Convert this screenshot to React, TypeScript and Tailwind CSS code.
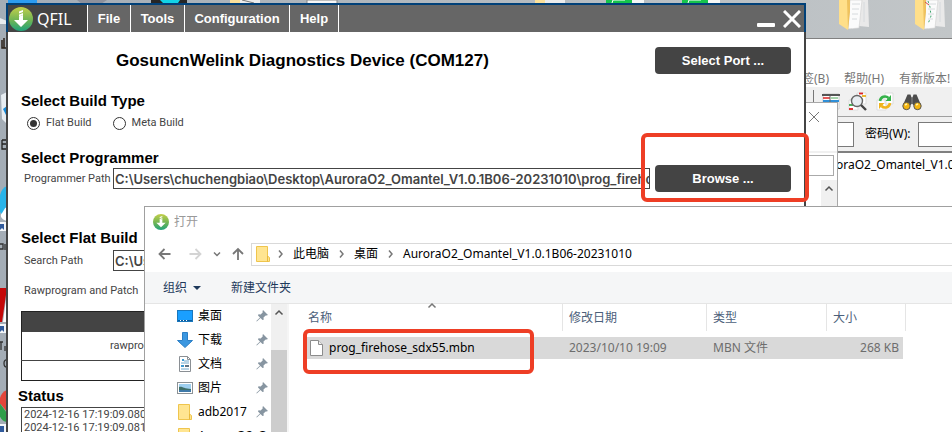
import React, { useState } from "react";

const UI_FONT = "font-['Noto_Sans','Noto_Sans_CJK_SC',sans-serif]";

function DownloadLogo({ className }: { className: string }) {
  return (
    <svg className={className} viewBox="0 0 24 24" aria-hidden="true">
      <defs>
        <linearGradient id="logoFill" x1="0" y1="0" x2="0" y2="1">
          <stop offset="0" stopColor="#c3cf4a" />
          <stop offset="0.55" stopColor="#6fb454" />
          <stop offset="1" stopColor="#1fa37c" />
        </linearGradient>
      </defs>
      <circle cx="12" cy="12" r="12" fill="url(#logoFill)" />
      <path d="M10 4.5l4-1.5v2l-4 1.5zM10 7.5l4-1.5v2l-4 1.5z" fill="#fff" />
      <path d="M10 9.500l4-1.500v5h5L12 20l-7-7h5z" fill="#fff" />
    </svg>
  );
}

function Folder({ className }: { className: string }) {
  return (
    <svg className={className} viewBox="0 0 14 16" aria-hidden="true">
      <path d="M.5.500h11v9.500l2 1.500v4H.5z" fill="#ffe591" stroke="#efc54d" />
      <path d="M11.500 10v5.500" stroke="#e9b93c" />
    </svg>
  );
}

function Pin() {
  return (
    <svg className="h-3 w-3" viewBox="0 0 12 12" aria-hidden="true">
      <path d="M7 0l5 5-1.500.600-.800-.200L7.500 7.500l.200 2.300L6.500 10 4.500 8 .800 11.500.300 11 4 7.500 2 5.500l.500-1.200 2.200.200L6.800 2.300 6.500 1.200z" fill="#8795a1" />
    </svg>
  );
}

function Chevron({ dir = "right", className = "" }: { dir?: "right" | "up" | "down"; className?: string }) {
  const d = { right: "M3 1.500l3 3.500-3 3.500", up: "M1.500 6.500L5 3l3.500 3.500", down: "M2 3.500l3 3 3-3" }[dir];
  return (
    <svg className={"h-[10px] w-[10px] shrink-0 " + className} viewBox="0 0 10 10" fill="none" stroke="currentColor" strokeWidth="1.5" aria-hidden="true">
      <path d={d} />
    </svg>
  );
}

function Arrow({ dir, className }: { dir: "left" | "right" | "up"; className: string }) {
  const d = {
    left: "M12.500 7H1.500M6.500 2L1.500 7l5 5",
    right: "M1.500 7h11M7.500 2l5 5-5 5",
    up: "M7 13V2M2 7l5-5 5 5",
  }[dir];
  return (
    <svg className={"h-[14px] w-[14px] " + className} viewBox="0 0 14 14" fill="none" stroke="currentColor" strokeWidth="1.8" aria-hidden="true">
      <path d={d} />
    </svg>
  );
}

function Wallpaper() {
  return (
    <svg className="absolute top-0 left-0 h-[432px] w-[952px]" viewBox="0 0 952 432" aria-hidden="true">
      <rect x="8" width="29" height="4" fill="#2c9cf0" />
      <path d="M77 0h30l-6 4H82z" fill="#8d919c" />
      <rect x="151" width="36" height="4" fill="#262626" />
      <path d="M160 0h20l-2 3h-15z" fill="#12d3e6" />
      <rect x="230" width="10" height="4" fill="#fbe09a" />
      <rect x="240" width="20" height="4" fill="#ececec" />
      <path d="M242 0l12 3" stroke="#777" />
      <rect x="307" width="30" height="4" fill="#f7f7f7" stroke="#888" />
      <rect x="535" width="10" height="4" fill="#fbe09a" />
      <rect x="545" width="20" height="4" fill="#ececec" />
      {[606, 682].map((x) => (
        <g key={x}>
          <rect x={x} width="38" height="4" fill="#f5f7f6" />
          <rect x={x} width="26" height="4" fill="#16c44c" />
          <path d={`M${x + 6} 3l1-3h12`} stroke="#fff" fill="none" />
        </g>
      ))}
      {[839, 915].map((x) => (
        <g key={x}>
          <path d={`M${x + 10} 0h19l1 27-10-1-7 3z`} fill="#e9e9e9" />
          <path d={`M${x + 11} 0h12l-3 28-11 1z`} fill="#fbfbfb" stroke="#cfcfcf" strokeWidth=".6" />
          <path d={`M${x + 13} 4h8M${x + 13} 9h7M${x + 13} 14h6M${x + 13} 19h5M${x + 25} 2v20`} stroke="#d6dadd" strokeWidth="1" />
          <path d={`M${x} 0h8l2 6-1 24L${x} 24z`} fill="#ffdf8a" />
          <path d={`M${x + 8} 0h3v12l-2 18z`} fill="#efc25e" />
        </g>
      ))}
      <path d="M928 1l2 6 1 9-3 8" stroke="#3aa36b" strokeDasharray="2 3" fill="none" />
      <path d="M925 2l4 3" stroke="#d04b4b" />
      <path d="M0 18l7 3v3H0z" fill="#e8ebee" />
      <path d="M2 40v8h5M4 38v10" stroke="#2a2118" strokeWidth="1.500" fill="none" />
      <path d="M7 92L1 95l1 24 5 5z" fill="#e7edf2" />
      <path d="M7 106l-4 3 3 6z" fill="#1689d8" />
      <path d="M2 140h5M2 140v9h5M2 144h5" stroke="#222" strokeWidth="1.300" fill="none" />
      <path d="M7 186c-5 2-8 8-8 17s3 15 8 18z" fill="#28b4ea" />
      <path d="M7 207c-3 1-3 4-5 6-2 2-2 6 5 8z" fill="#fff" />
      <rect y="222" width="6" height="9" fill="#f4f6f8" />
      <path d="M0 224h4v6l-2-2-2 2z" fill="#315b9c" />
      <path d="M0 244h3v5H0M5 244v6" stroke="#333" strokeWidth="1.300" fill="none" />
      <path d="M0 288h7l-5 34H0z" fill="#c40808" />
      <path d="M7 292v30H3z" fill="#fff" />
      <rect y="324" width="6" height="9" fill="#f4f6f8" />
      <path d="M0 326h4v6l-2-2-2 2z" fill="#315b9c" />
      <path d="M0 342h3M1 342v8M5 346v5M7 360c-4-1-4 7 0 7" stroke="#333" strokeWidth="1.300" fill="none" />
      <path d="M7 390c-5 2-7 6-8 12l8 10z" fill="#e3463a" />
      <path d="M-1 402l8 11v9c-4 0-7-4-8-8z" fill="#2f9e49" />
      <rect y="424" width="6" height="8" fill="#f4f6f8" />
      <path d="M0 426h4v6H0z" fill="#315b9c" />
    </svg>
  );
}

function ClientWindow() {
  return (
    <section className={"absolute top-[38px] right-0 bottom-0 left-[802px] overflow-hidden border-t border-[#808080] bg-white text-xs whitespace-nowrap " + UI_FONT}>
      <nav className="flex h-12 items-end gap-[15px] text-[#767676]">
        <span className="leading-4">签(B)</span>
        <span className="leading-4">帮助(H)</span>
        <span className="leading-4">有新版本!</span>
      </nav>
      <div className="flex h-[30px] items-center gap-2 border-b border-[#a0a0a0] bg-[#f0f0f0] pl-[11px]">
        <span className="h-6 w-px bg-[#777]" />
        <svg className="h-[18px] w-[18px]" viewBox="0 0 18 18" aria-hidden="true">
          <path d="M1 1h16v15H1z" fill="#fff" stroke="#ccc" />
          <path d="M0 2h18" stroke="#555" strokeWidth="2" />
          <path d="M1 5h7" stroke="#d22" strokeWidth="1.500" />
          <path d="M1 8h16" stroke="#2f8fd8" strokeWidth="2" />
          <path d="M9 5h7M11 11h5M11 14h5" stroke="#4aa657" />
          <path d="M8 3v13" stroke="#666" />
        </svg>
        <svg className="h-5 w-5" viewBox="0 0 20 20" aria-hidden="true">
          <path d="M9 1h9v11H9zM1 8h9v10H1z" fill="#fff" stroke="#ddd" />
          <path d="M11 1.500h4" stroke="#d22" strokeWidth="1.800" />
          <path d="M14 4h4" stroke="#e8b21e" strokeWidth="1.800" />
          <path d="M1 13h4" stroke="#3aa34a" strokeWidth="1.800" />
          <path d="M1 17h4" stroke="#d22" strokeWidth="1.800" />
          <circle cx="9" cy="9" r="5.500" fill="#e8edf1" stroke="#666" strokeWidth="1.400" />
          <path d="M13 13l5 5" stroke="#444" strokeWidth="2.400" />
        </svg>
        <svg className="h-5 w-[18px]" viewBox="0 0 18 20" aria-hidden="true">
          <path d="M9 1h8v11H9zM1 8h9v10H1z" fill="#fff" stroke="#ddd" />
          <path d="M4 9a5 5 0 0 1 8.500-3" fill="none" stroke="#35b24a" strokeWidth="2.600" />
          <path d="M15 3v6H9.500z" fill="#35b24a" />
          <path d="M14 11a5 5 0 0 1-8.500 3" fill="none" stroke="#f0b31c" strokeWidth="2.600" />
          <path d="M3 17v-6h5.500z" fill="#f0b31c" />
        </svg>
        <svg className="h-[18px] w-5" viewBox="0 0 20 18" aria-hidden="true">
          <path d="M5.500 1.500h3l1 3h1l1-3h3L19 12l-4 4-4.500-5h-1L5 16l-4-4z" fill="#4c4c4c" />
          <path d="M10 5v6" stroke="#888" />
          <circle cx="4.500" cy="13" r="3.700" fill="#f5b50f" stroke="#555" />
          <circle cx="15.500" cy="13" r="3.700" fill="#f5b50f" stroke="#555" />
          <path d="M3 12l2-1M14 12l2-1" stroke="#fff3a8" strokeWidth="1.500" />
        </svg>
      </div>
      <div className="flex h-9 items-center border-b-2 border-[#808080] bg-[#f0f0f0]">
        <input aria-label="用户名" className="h-[25px] w-[52px] border border-[#7a7a7a] bg-white" />
        <label htmlFor="pwd" className="ml-[11px] w-[53px]">密码(W):</label>
        <input id="pwd" className="h-[25px] min-w-0 flex-1 border border-r-0 border-[#7a7a7a] bg-white" />
      </div>
      <p className="pt-1 pl-[34px] leading-4">oraO2_Omantel_V1.0</p>
    </section>
  );
}

function BackDialog() {
  return (
    <section className="absolute top-[102px] bottom-0 left-[700px] flex w-[138px] flex-col border border-[#a8a8a8] bg-white">
      <div className="flex h-[50px] items-start justify-end border-b-2 border-[#f0f0f0] pt-2 pr-[17px]">
        <button aria-label="关闭" className="text-[#777]">
          <svg className="h-3 w-3" viewBox="0 0 12 12" stroke="currentColor" aria-hidden="true"><path d="M1 1l10 10M11 1L1 11" /></svg>
        </button>
      </div>
      <div className="pt-[2px] pr-[3px]">
        <input aria-label="搜索" className="block h-[21px] w-full border border-[#aaa]" />
      </div>
      <div className="mt-1 flex flex-1 justify-end">
        <div className="w-4 bg-[#f0f0f0] pt-1 pl-[3px] text-[#555]"><Chevron dir="up" /></div>
      </div>
    </section>
  );
}

const heading = "font-['Liberation_Sans',Arial,sans-serif] text-[15px] leading-[14px] font-bold text-black";
const bodyText = "font-[Roboto,sans-serif] text-[11px] whitespace-nowrap";
const rowLabel = bodyText + " w-[92px] pt-[2px] pl-[3px]";
const darkButton = "h-[27px] w-[136px] shrink-0 rounded bg-[#444] text-[13px] font-bold text-white";
const pathInput = "h-[21px] min-w-0 flex-1 border border-[#444] bg-white pl-px font-[Inter,sans-serif] text-[13px] font-semibold text-[#444] outline-none";

function QfilWindow() {
  const [build, setBuild] = useState("Flat Build");
  return (
    <section className="absolute top-[3px] bottom-0 left-[6px] flex w-[800px] flex-col overflow-hidden bg-white font-['Liberation_Sans',Arial,sans-serif]">
      <header className="flex h-[29px] shrink-0 border-2 border-b-0 border-[#004078] bg-[#666]">
        <div className="flex w-[79px] items-center gap-1 bg-[#444] pl-[1px] text-white">
          <DownloadLogo className="h-6 w-6" />
          <span className="font-['Noto_Sans',sans-serif] text-base">QFIL</span>
        </div>
        <nav className="flex border-r border-white text-[13px] font-bold text-white">
          <button className="w-[43px] border-l border-white">File</button>
          <button className="w-[54px] border-l border-white">Tools</button>
          <button className="w-[105px] border-l border-white">Configuration</button>
          <button className="w-[49px] border-l border-white">Help</button>
        </nav>
        <div className="ml-auto flex items-center gap-2 pr-[3px] text-white">
          <button aria-label="Minimize">
            <svg className="h-[18px] w-[18px]" viewBox="0 0 18 18" aria-hidden="true"><rect y="13" width="18" height="4" rx="1" fill="currentColor" /></svg>
          </button>
          <button aria-label="Close">
            <svg className="h-[18px] w-[18px]" viewBox="0 0 18 18" stroke="currentColor" strokeWidth="3" aria-hidden="true"><path d="M1 1l16 16M17 1L1 17" /></svg>
          </button>
        </div>
      </header>
      <div className="flex-1 border-x-2 border-[#444] px-[13px] pt-[15px] text-[#444]">
        <div className="flex items-center">
          <h1 className="flex-1 pl-[95px] text-[17px] font-bold text-black">GosuncnWelink Diagnostics Device (COM127)</h1>
          <button className={darkButton}>Select Port ...</button>
        </div>
        <h2 className={heading + " mt-5"}>Select Build Type</h2>
        <div className={"mt-[5px] flex h-5 items-center gap-[21px] pl-[6px] " + bodyText}>
          {["Flat Build", "Meta Build"].map((name) => (
            <label key={name} className="flex items-center gap-[6px]">
              <input
                type="radio"
                name="build"
                checked={build === name}
                onChange={() => setBuild(name)}
                className="h-[13px] w-[13px] appearance-none rounded-full border border-[#333] bg-white bg-clip-content p-[2px] checked:bg-[#333]"
              />
              {name}
            </label>
          ))}
        </div>
        <h2 className={heading + " mt-[18px]"}>Select Programmer</h2>
        <div className="flex h-[27px] items-center">
          <label htmlFor="programmer" className={rowLabel}>Programmer Path</label>
          <input id="programmer" className={pathInput} defaultValue="C:\Users\chuchengbiao\Desktop\AuroraO2_Omantel_V1.0.1B06-20231010\prog_firehose" />
          <button className={darkButton + " ml-[5px]"}>Browse ...</button>
        </div>
        <h2 className={heading + " mt-[39px]"}>Select Flat Build</h2>
        <div className="mt-[2px] flex h-[27px] items-center">
          <label htmlFor="search" className={rowLabel}>Search Path</label>
          <input id="search" className={pathInput} defaultValue="C:\Users" />
        </div>
        <p className={"mt-[7px] pl-[3px] leading-5 " + bodyText}>Rawprogram and Patch</p>
        <table className={"mt-[10px] w-full border-collapse border border-[#222] " + bodyText}>
          <thead><tr className="h-5 bg-[#444]"><th /></tr></thead>
          <tbody>
            <tr className="h-[29px] border-b border-[#444]"><td className="pl-[88px]">rawprog</td></tr>
            <tr className="h-5"><td /></tr>
          </tbody>
        </table>
        <h2 className={heading + " mt-2 -ml-[3px]"}>Status</h2>
        <div className={"mt-1 h-20 border border-[#444] px-[2px] " + bodyText}>
          <p className="leading-[13px]">2024-12-16 17:19:09.080</p>
          <p className="leading-[13px]">2024-12-16 17:19:09.081</p>
        </div>
      </div>
    </section>
  );
}

const places = [
  {
    name: "桌面",
    icon: (
      <svg className="h-4 w-4" viewBox="0 0 16 16" aria-hidden="true">
        <rect x=".500" y="2.500" width="15" height="11" fill="#1a9fff" stroke="#1977bd" />
        <path d="M1 12.500h14" stroke="#0b5c9c" /><path d="M3 12.500h9" stroke="#fff" strokeDasharray="1 2" />
      </svg>
    ),
  },
  {
    name: "下载",
    icon: <svg className="h-4 w-4" viewBox="0 0 16 16" aria-hidden="true"><path d="M5.500.500h5v8h5L8 15.500.500 8.500h5z" fill="#3b97e0" stroke="#2b7fc6" /></svg>,
  },
  {
    name: "文档",
    icon: (
      <svg className="h-4 w-4" viewBox="0 0 16 16" aria-hidden="true">
        <path d="M2.500.500h8l3 3v12h-11z" fill="#fff" stroke="#8a8f94" /><path d="M10.500.500v3h3" fill="none" stroke="#8a8f94" />
        <path d="M7 5h5M4 7h8M4 13h8" stroke="#6ea8cc" /><path d="M4 9h3v2H4zM5 3h2v2H5z" fill="#3a9ad2" /><path d="M8 9h4v2H8z" fill="#5d7282" />
      </svg>
    ),
  },
  {
    name: "图片",
    icon: (
      <svg className="h-4 w-4" viewBox="0 0 16 16" aria-hidden="true">
        <rect x=".500" y="2.500" width="15" height="11" fill="#fff" stroke="#8c9296" />
        <path d="M2 4h12v8H2z" fill="#9fd0f0" /><path d="M2 7c3-1 5 2 12 2v3H2z" fill="#3f6f68" /><path d="M2 10h12v2H2z" fill="#3f79a8" />
      </svg>
    ),
  },
  { name: "adb2017", icon: <Folder className="h-4 w-4" /> },
  { name: "AuroraO2_O", icon: <Folder className="h-4 w-4" />, unpinned: true },
];

function OpenDialog() {
  return (
    <section className={"absolute top-[206px] right-0 bottom-0 left-[144px] flex flex-col overflow-hidden border-t border-l border-[#a0a0a0] bg-white text-xs whitespace-nowrap " + UI_FONT}>
      <div className="flex h-[29px] shrink-0 items-center gap-[5px] pl-2 text-[#999]">
        <DownloadLogo className="h-4 w-4" />
        <span>打开</span>
      </div>
      <div className="flex h-9 shrink-0 items-center">
        <div className="flex w-[106px] items-center pl-[13px] text-[#777]">
          <button aria-label="后退"><Arrow dir="left" className="block" /></button>
          <button aria-label="前进" className="ml-4"><Arrow dir="right" className="block text-[#d4d4d4]" /></button>
          <button aria-label="最近位置" className="ml-[10px]"><Chevron dir="down" className="block" /></button>
          <button aria-label="上移" className="ml-[9px]"><Arrow dir="up" className="block" /></button>
        </div>
        <div className="flex h-[23px] flex-1 items-center border border-r-0 border-[#d9d9d9] pl-1">
          <Folder className="h-4 w-[14px]" />
          <Chevron className="ml-[6px] text-[#777]" />
          <span className="ml-[7px]">此电脑</span>
          <Chevron className="ml-[8px] text-[#777]" />
          <span className="ml-[7px]">桌面</span>
          <Chevron className="ml-[8px] text-[#777]" />
          <span className="ml-[7px]">AuroraO2_Omantel_V1.0.1B06-20231010</span>
        </div>
      </div>
      <div className="flex h-8 shrink-0 items-center border-b border-[#e5e5e5] bg-[#f5f6f7] pl-[18px] text-[#1e395b]">
        <button className="flex items-center gap-[6px]">
          组织
          <svg className="h-1 w-2" viewBox="0 0 8 4" aria-hidden="true"><path d="M0 0h8L4 4z" fill="currentColor" /></svg>
        </button>
        <button className="ml-[30px]">新建文件夹</button>
      </div>
      <div className="flex min-h-0 flex-1">
        <ul className="w-[126px] shrink-0 pl-8">
          {places.map((p) => (
            <li key={p.name} className="flex h-6 items-center gap-[5px] pr-[3px]">
              {p.icon}
              <span className="flex-1">{p.name}</span>
              {!p.unpinned && <Pin />}
            </li>
          ))}
        </ul>
        <div className="w-4 shrink-0 bg-[#f0f0f0]">
          <div className="flex h-[46px] justify-center pt-1 text-[#555]"><Chevron dir="up" /></div>
          <div className="h-full bg-[#cdcdcd]" />
        </div>
        <div className="relative flex-1 border-l-2 border-[#f5f5f5] pl-[17px]">
          <Chevron dir="up" className="absolute top-[-3px] left-[138px] text-[#777]" />
          <table className="w-[600px] table-fixed border-separate border-spacing-0 text-left text-[#6d6d6d]">
            <colgroup>
              <col className="w-[257px]" /><col className="w-[144px]" /><col className="w-[120px]" /><col className="w-[79px]" />
            </colgroup>
            <thead>
              <tr className="h-[27px] text-[#4c607a]">
                <th className="border-r border-[#e5e5e5] p-0 pl-[2px] font-normal">名称</th>
                <th className="border-r border-[#e5e5e5] p-0 pl-[6px] font-normal">修改日期</th>
                <th className="border-r border-[#e5e5e5] p-0 pl-[6px] font-normal">类型</th>
                <th className="border-r border-[#e5e5e5] p-0 pl-[6px] font-normal">大小</th>
              </tr>
            </thead>
            <tbody>
              <tr><td colSpan={4} className="h-[6px] p-0" /></tr>
              <tr className="h-[22px]">
                <td className="bg-[#d9d9d9] p-0 pl-1 text-black">
                  <span className="flex items-center gap-[6px]">
                    <svg className="h-4 w-[13px]" viewBox="0 0 13 16" aria-hidden="true">
                      <path d="M.500.500h8l4 4v11H.500z" fill="#fff" stroke="#8c8c8c" /><path d="M8.500.500v4h4" fill="#eee" stroke="#8c8c8c" />
                    </svg>
                    prog_firehose_sdx55.mbn
                  </span>
                </td>
                <td className="bg-[#d9d9d9] p-0 pl-[6px]">2023/10/10 19:09</td>
                <td className="bg-[#d9d9d9] p-0 pl-[6px]">MBN 文件</td>
                <td className="p-0 pr-[3px] text-right"><div className="bg-[#d9d9d9] pr-1 leading-[22px]">268 KB</div></td>
              </tr>
            </tbody>
          </table>
        </div>
      </div>
    </section>
  );
}

export default function App() {
  return (
    <main className="relative h-screen overflow-hidden bg-linear-to-r from-[#a4adb6] to-[#c2c6c8]">
      <Wallpaper />
      <ClientWindow />
      <BackDialog />
      <QfilWindow />
      <OpenDialog />
      <div className="absolute top-[133px] left-[641px] h-[69px] w-[168px] rounded-md border-4 border-[#ee3e25]" />
      <div className="absolute top-[329px] left-[303px] h-[45px] w-[231px] rounded-md border-4 border-[#ee3e25]" />
    </main>
  );
}
